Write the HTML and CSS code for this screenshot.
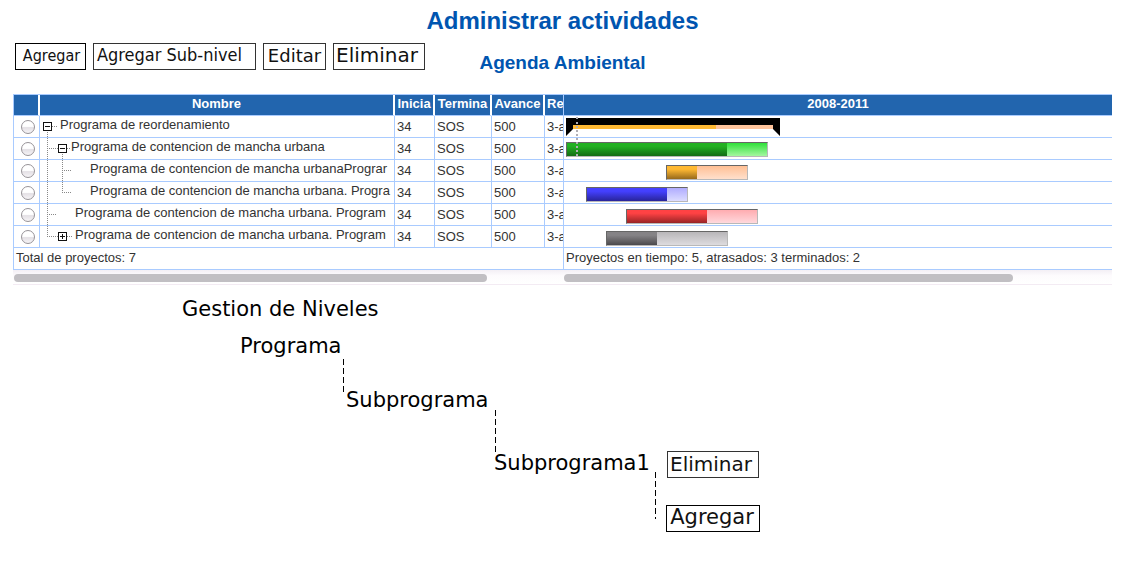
FILE: index.html
```html
<!DOCTYPE html>
<html lang="es">
<head>
<meta charset="utf-8">
<title>Administrar actividades</title>
<link rel="stylesheet" href="styles.css">
</head>
<body>
<header class="top">
  <h1 class="title">Administrar actividades</h1>
  <div class="bar">
    <div class="tools">
      <button type="button" class="btn btn-add">Agregar</button>
      <button type="button" class="btn btn-sub">Agregar Sub-nivel</button>
      <button type="button" class="btn btn-edit">Editar</button>
      <button type="button" class="btn btn-del">Eliminar</button>
    </div>
    <h2 class="subtitle">Agenda Ambiental</h2>
  </div>
</header>

<main>
<section class="gantt">
  <div class="pane pane-list">
    <table class="list">
      <colgroup><col class="c-pick"><col class="c-name"><col class="c-start"><col class="c-end"><col class="c-prog"><col class="c-res"></colgroup>
      <thead>
        <tr><th></th><th>Nombre</th><th>Inicia</th><th>Termina</th><th>Avance</th><th class="left">Re</th></tr>
      </thead>
      <tbody>
        <tr>
          <td class="pick"><input type="radio" name="row" aria-label="Fila 1"></td>
          <td class="name"><div class="node root"><button type="button" class="toggle" aria-label="Contraer"><svg width="9" height="21"><rect class="box" x=".5" y="6.5" width="8" height="8"/><path class="sign" d="M2 10.5h5"/><path class="dots" d="M4.500 16v5"/></svg></button><svg width="8" height="21"><path class="dots" d="M0 10.500h6"/></svg><span>Programa de reordenamiento</span></div></td>
          <td>34</td><td>SOS</td><td>500</td><td>3-a</td>
        </tr>
        <tr>
          <td class="pick"><input type="radio" name="row" aria-label="Fila 2"></td>
          <td class="name"><div class="node"><svg width="18" height="21"><path class="dots" d="M7.500 0v21M7 10.500h11"/></svg><button type="button" class="toggle" aria-label="Contraer"><svg width="9" height="21"><rect class="box" x=".5" y="6.500" width="8" height="8"/><path class="sign" d="M2 10.500h5"/><path class="dots" d="M4.500 16v5"/></svg></button><svg width="4" height="21"><path class="dots" d="M0 10.500h4"/></svg><span>Programa de contencion de mancha urbana</span></div></td>
          <td>34</td><td>SOS</td><td>500</td><td>3-a</td>
        </tr>
        <tr>
          <td class="pick"><input type="radio" name="row" aria-label="Fila 3"></td>
          <td class="name"><div class="node"><svg width="50" height="21"><path class="dots" d="M7.500 0v21M22.500 0v21M22 10.500h10"/></svg><span>Programa de contencion de mancha urbanaPrograr</span></div></td>
          <td>34</td><td>SOS</td><td>500</td><td>3-a</td>
        </tr>
        <tr>
          <td class="pick"><input type="radio" name="row" aria-label="Fila 4"></td>
          <td class="name"><div class="node"><svg width="50" height="21"><path class="dots" d="M7.500 0v21M22.500 0v11M22 10.500h10"/></svg><span>Programa de contencion de mancha urbana. Progra</span></div></td>
          <td>34</td><td>SOS</td><td>500</td><td>3-a</td>
        </tr>
        <tr>
          <td class="pick"><input type="radio" name="row" aria-label="Fila 5"></td>
          <td class="name"><div class="node"><svg width="35" height="21"><path class="dots" d="M7.500 0v21M7 10.500h10"/></svg><span>Programa de contencion de mancha urbana. Program</span></div></td>
          <td>34</td><td>SOS</td><td>500</td><td>3-a</td>
        </tr>
        <tr>
          <td class="pick"><input type="radio" name="row" aria-label="Fila 6"></td>
          <td class="name"><div class="node"><svg width="18" height="21"><path class="dots" d="M7.500 0v11M7 10.500h11"/></svg><button type="button" class="toggle" aria-label="Expandir"><svg width="9" height="21"><rect class="box" x=".5" y="6.500" width="8" height="8"/><path class="sign" d="M2 10.500h5M4.500 8v5"/></svg></button><svg width="8" height="21"><path class="dots" d="M0 10.500h5"/></svg><span>Programa de contencion de mancha urbana. Program</span></div></td>
          <td>34</td><td>SOS</td><td>500</td><td>3-a</td>
        </tr>
      </tbody>
    </table>
    <div class="total">Total de proyectos: 7</div>
    <div class="track"><div class="thumb thumb-list"></div></div>
  </div>

  <div class="pane pane-chart">
    <div class="period">2008-2011</div>
    <div class="lanes">
      <div class="lane">
        <svg class="summary" width="214" height="18"><path fill="#ffb933" d="M7 7h143v4H7z"/><path fill="#ffc49c" d="M150 7h57v4h-57z"/><path d="M0 0h214v18l-7-7V7H7v4l-7 7z"/></svg>
      </div>
      <div class="lane"><div class="task green" style="margin-left:2px;width:202px"><div class="done" style="width:160px"></div></div></div>
      <div class="lane"><div class="task orange" style="margin-left:102px;width:82px"><div class="done" style="width:30px"></div></div></div>
      <div class="lane"><div class="task blue" style="margin-left:22px;width:102px"><div class="done" style="width:80px"></div></div></div>
      <div class="lane"><div class="task red" style="margin-left:62px;width:132px"><div class="done" style="width:80px"></div></div></div>
      <div class="lane"><div class="task gray" style="margin-left:42px;width:122px"><div class="done" style="width:50px"></div></div></div>
      <div class="today"></div>
    </div>
    <div class="total">Proyectos en tiempo: 5, atrasados: 3 terminados: 2</div>
    <div class="track"><div class="thumb thumb-chart"></div></div>
  </div>
</section>

<section class="levels">
  <h3 class="item heading">Gestion de Niveles</h3>
  <div class="item n1">Programa</div>
  <svg class="item link l1" width="1" height="36"><path d="M.5 0v36"/></svg>
  <div class="item n2">Subprograma</div>
  <svg class="item link l2" width="1" height="42"><path d="M.5 0v42"/></svg>
  <div class="item n3">Subprograma1</div>
  <svg class="item link l3" width="1" height="47"><path d="M.5 0v47"/></svg>
  <button type="button" class="btn btn-del item b1">Eliminar</button>
  <button type="button" class="btn btn-big item b2">Agregar</button>
</section>
</main>
</body>
</html>
```
FILE: styles.css
```css
* { box-sizing: border-box; }
body {
  margin: 0;
  padding: 0 16px 0 13px;
  background: #fff;
  color: #333;
  font: 13px/18px "Liberation Sans", Arial, sans-serif;
}
h1, h2, h3 { margin: 0; }
svg { display: block; flex: none; }

/* heading and toolbar */
.title {
  padding-top: 6px;
  color: #0055b0;
  font-size: 24px;
  line-height: 30px;
  text-align: center;
}
.bar {
  display: grid;
  grid-template-columns: 1fr auto 1fr;
  align-items: center;
}
.tools { display: flex; gap: 7px; padding-left: 2px; }
.subtitle {
  padding-top: 14px;
  color: #0055b0;
  font-size: 19px;
  line-height: 26px;
}
.btn {
  height: 27px;
  padding: 0;
  border: 1px solid #333;
  border-radius: 0;
  background: #fff;
  color: #111;
  font: 18px/22px "DejaVu Sans", sans-serif;
  white-space: nowrap;
}
.btn-add { width: 71px; padding-left: 2px; border-color: #000; font: 16px/22px "DejaVu Sans Condensed", "DejaVu Sans", sans-serif; }
.btn-sub { width: 163px; padding: 0 10px 3px 0; font: 18px/22px "DejaVu Sans Condensed", "DejaVu Sans", sans-serif; }
.btn-edit { width: 63px; }
.btn-del { width: 92px; padding: 0 4px 2px 0; font-size: 20px; }
.btn-big { width: 94px; padding: 0 2px 3px 0; border-color: #000; font-size: 21px; }

/* gantt */
.gantt { display: flex; margin-top: 18px; }
.pane { overflow: hidden; border-top: 1px solid #a9cbff; }
.pane-list { flex: 0 0 551px; }
.pane-chart { flex: 1; min-width: 0; }
.list {
  width: 610px;
  table-layout: fixed;
  border-spacing: 0;
}
.pane-list .list { border-left: 1px solid #a9cbff; }
.pane-list { position: relative; }
.pane-list::after {
  content: "";
  position: absolute;
  top: 0;
  right: 0;
  bottom: 15px;
  width: 1px;
  background: #a9cbff;
}
.c-pick { width: 26px; }
.c-name { width: 355px; }
.c-start { width: 40px; }
.c-end { width: 57px; }
.c-prog { width: 53px; }
th, .period {
  height: 21px;
  padding: 0 0 2px;
  border-bottom: 1px solid #a9cbff;
  background: #2265ae;
  color: #fff;
  font-weight: bold;
  text-align: center;
}
th { overflow: hidden; border-right: 2px solid #fff; line-height: 16px; white-space: nowrap; }
th.left { padding-left: 2px; text-align: left; }
td {
  height: 22px;
  padding: 0 0 0 2px;
  overflow: hidden;
  border-right: 1px solid #a9cbff;
  border-bottom: 1px solid #a9cbff;
  white-space: nowrap;
}
td.pick { padding: 1px 0 0 7px; }
td.name { padding: 0; }
.pick input {
  display: block;
  width: 14px;
  height: 14px;
  margin: 0;
  appearance: none;
  border: 1px solid #979398;
  border-radius: 50%;
  background: linear-gradient(#fff 45%, #e4e0e5 55%, #f6f4f6);
}
.node { display: flex; height: 21px; }
.node.root { padding-left: 3px; }
.toggle { padding: 0; border: 0; background: none; }
.box { fill: #fff; stroke: #111; }
.sign { stroke: #111; }
.dots { fill: none; stroke: #888; stroke-dasharray: 1 1; }

.lanes { position: relative; }
.lane { height: 22px; border-bottom: 1px solid #a9cbff; overflow: hidden; }
.summary { margin: 2px 0 0 2px; }
.task {
  height: 15px;
  margin-top: 5px;
  border: 1px solid;
  border-color: #666 #b8b8b8 #b8b8b8 #666;
}
.done { height: 13px; }
.green { margin-top: 4px; background: linear-gradient(#2fe03a, #a4f7a0); }
.green .done { background: linear-gradient(#22b022 25%, #136c16); }
.orange { background: linear-gradient(#ffbf94, #ffe0cc); }
.orange .done { background: linear-gradient(#ffb933 25%, #96691c); }
.blue { background: linear-gradient(#b0acff, #dcdcff); }
.blue .done { background: linear-gradient(#4440ff 25%, #28249a); }
.red { background: linear-gradient(#ffacb0, #ffd8dc); }
.red .done { background: linear-gradient(#ff4244 25%, #982426); }
.gray { background: linear-gradient(#b8b6b9, #dddbde); }
.gray .done { background: linear-gradient(#858386 25%, #4b494c); }
.today {
  position: absolute;
  top: 1px;
  left: 12px;
  height: 39px;
  border-left: 2px dotted #b0aeb4;
}
.total {
  height: 22px;
  padding: 1px 2px 0;
  border-bottom: 1px solid #a9cbff;
  white-space: nowrap;
}
.pane-list .total { border-left: 1px solid #a9cbff; }
.track {
  height: 15px;
  padding: 4px 0 0;
  border-bottom: 1px solid #f3ebf3;
  background: linear-gradient(#f3eff5, #fdfbfd 40%, #fff);
}
.pane-list .track { padding-left: 1px; }
.thumb { height: 8px; border-radius: 4px; background: #c1bfc3; }
.thumb-list { width: 86%; }
.thumb-chart { width: 82%; }

/* level diagram */
.levels {
  position: relative;
  height: 260px;
  color: #000;
  font: 21px/26px "DejaVu Sans", sans-serif;
  white-space: nowrap;
}
.item { position: absolute; }
.heading { top: 11px; left: 169px; font: inherit; }
.n1 { top: 48px; left: 227px; }
.n2 { top: 102px; left: 333px; }
.n3 { top: 165px; left: 481px; }
.link path { stroke: #000; stroke-dasharray: 6 3; }
.l1 { top: 74px; left: 330px; }
.l2 { top: 125px; left: 482px; }
.l3 { top: 187px; left: 642px; }
.b1 { top: 166px; left: 654px; }
.b2 { top: 220px; left: 653px; }
```
